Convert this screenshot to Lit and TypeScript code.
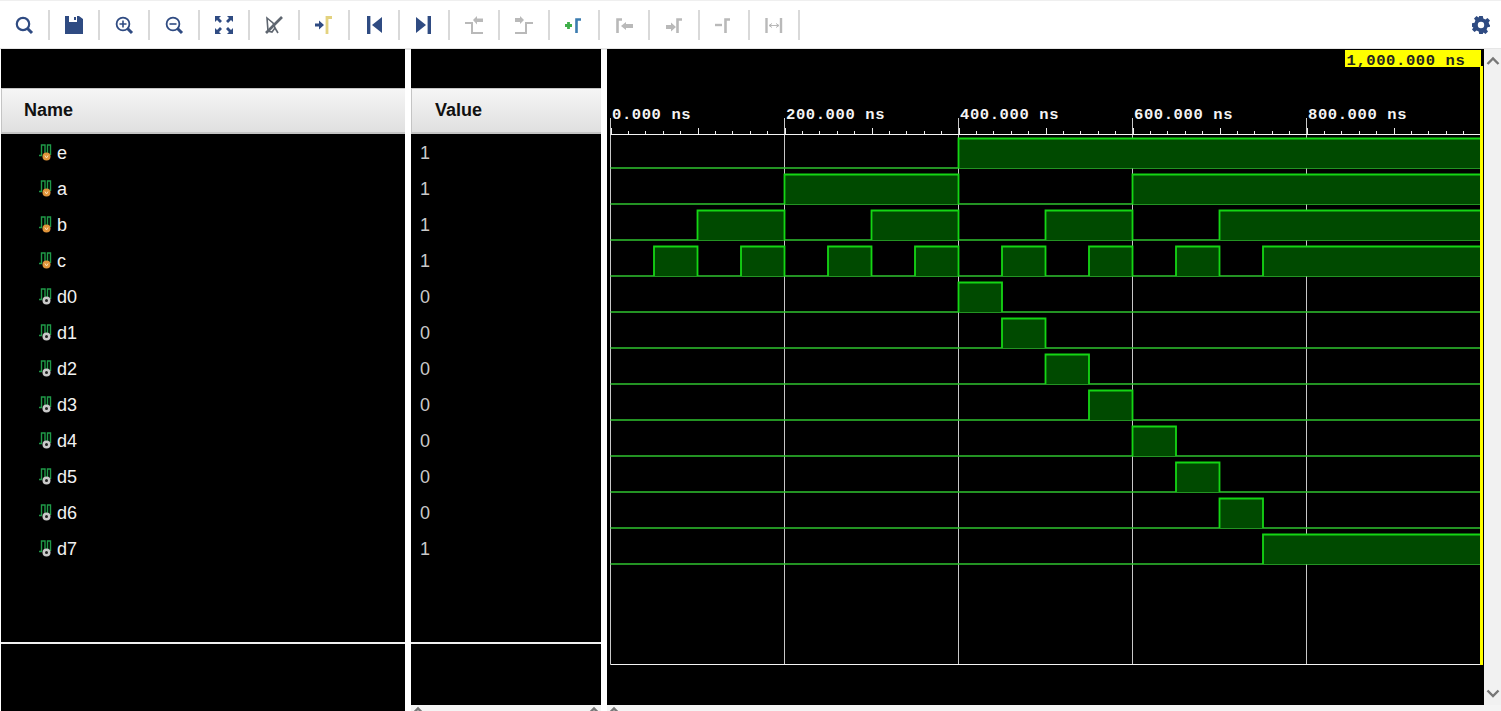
import { LitElement, html, css, svg } from "lit";
import { customElement } from "lit/decorators.js";

const NAVY = "#2f4b82";
const GREY = "#b9b9b9";
const RED_GREY = "#5f6670";

// time in ns -> screen x, the svg below uses page coordinates
const tx = (t: number) => 610.5 + t * 0.87;
const ROW_TOP = 138.5;
const ROW_H = 36;
const HIGH_H = 30;

type Signal = { name: string; value: string; input: boolean; high: [number, number][] };

const periodic = (start: number, period: number, width: number, lastOpen: number): [number, number][] => {
  const out: [number, number][] = [];
  for (let t = start; t < 1000; t += period) {
    out.push(t >= lastOpen ? [t, 1000] : [t, t + width]);
    if (t >= lastOpen) break;
  }
  return out;
};

const signals: Signal[] = [
  { name: "e", value: "1", input: true, high: [[400, 1000]] },
  { name: "a", value: "1", input: true, high: [[200, 400], [600, 1000]] },
  { name: "b", value: "1", input: true, high: periodic(100, 200, 100, 700) },
  { name: "c", value: "1", input: true, high: periodic(50, 100, 50, 750) },
  { name: "d0", value: "0", input: false, high: [[400, 450]] },
  { name: "d1", value: "0", input: false, high: [[450, 500]] },
  { name: "d2", value: "0", input: false, high: [[500, 550]] },
  { name: "d3", value: "0", input: false, high: [[550, 600]] },
  { name: "d4", value: "0", input: false, high: [[600, 650]] },
  { name: "d5", value: "0", input: false, high: [[650, 700]] },
  { name: "d6", value: "0", input: false, high: [[700, 750]] },
  { name: "d7", value: "1", input: false, high: [[750, 1000]] },
];

const bracket = (x: number, color: string) =>
  svg`<path d="M${x + 6} 4.5H${x + 1.5}V18" fill="none" stroke=${color} stroke-width="2.6"/>`;

const icons = [
  svg`<circle cx="9" cy="9" r="6.2" fill="none" stroke=${NAVY} stroke-width="2.2"/><path d="M13.5 13.5L18 18" stroke=${NAVY} stroke-width="3"/>`,
  svg`<path fill=${NAVY} d="M1 1H5V7H13V1H15L19 4V19H1Z"/><rect x="10" y="2" width="2" height="3" fill=${NAVY}/>`,
  svg`<circle cx="9" cy="9" r="6.4" fill="none" stroke=${NAVY} stroke-width="1.8"/><path d="M5.5 9H12.5M9 5.5V12.5" stroke=${NAVY} stroke-width="1.6"/><path d="M13.5 13.5L18 18" stroke=${NAVY} stroke-width="3"/>`,
  svg`<circle cx="9" cy="9" r="6.4" fill="none" stroke=${NAVY} stroke-width="1.8"/><path d="M5.5 9H12.5" stroke=${NAVY} stroke-width="1.6"/><path d="M13.5 13.5L18 18" stroke=${NAVY} stroke-width="3"/>`,
  svg`<g fill=${NAVY}><path d="M1 1H7L5 3L8 6L6 8L3 5L1 7Z"/><path d="M19 1H13L15 3L12 6L14 8L17 5L19 7Z"/><path d="M1 19H7L5 17L8 14L6 12L3 15L1 13Z"/><path d="M19 19H13L15 17L12 14L14 12L17 15L19 13Z"/></g>`,
  svg`<path d="M3 3L9 8L11 13L8 17L4 16Z" fill="none" stroke=${RED_GREY} stroke-width="1.6"/><path d="M2 18L18 2" stroke=${RED_GREY} stroke-width="2.6"/><path d="M11 13L14 18" stroke=${RED_GREY} stroke-width="1.6"/>`,
  svg`<path fill=${NAVY} d="M1 8.5H5V5.5L10 10L5 14.5V11.5H1Z"/><path d="M18 2.5H13V19" fill="none" stroke="#e3d27f" stroke-width="2.8"/>`,
  svg`<rect x="3" y="1" width="3.4" height="18" fill=${NAVY}/><path fill=${NAVY} d="M18 2V18L8 10Z"/>`,
  svg`<rect x="13.6" y="1" width="3.4" height="18" fill=${NAVY}/><path fill=${NAVY} d="M2 2V18L12 10Z"/>`,
  svg`<path d="M1 8H8V18H19" fill="none" stroke=${GREY} stroke-width="2"/><path fill=${GREY} d="M9 5L13 1V3.500H19V7H13V9.500Z"/>`,
  svg`<path d="M19 8H12V18H1" fill="none" stroke=${GREY} stroke-width="2"/><path fill=${GREY} d="M10 5L6 1V3H1V7H6V9Z"/>`,
  svg`<path d="M1 10.500H8M4.500 7V14" stroke="#3fae49" stroke-width="2.800"/>${bracket(11, "#3b7cb0")}`,
  svg`${bracket(2, GREY)}<path fill=${GREY} d="M7 11L12 7V9H19V13H12V15Z"/>`,
  svg`<path fill=${GREY} d="M2 10H7V7.500L12 12L7 16.500V14H2Z"/>${bracket(12, GREY)}`,
  svg`<path d="M1 10H8" stroke=${GREY} stroke-width="2.400"/>${bracket(10, GREY)}`,
  svg`<path d="M2.500 3V18M17 3V18" stroke=${GREY} stroke-width="2.400"/><path d="M5 10.500H15M5 10.500L8 8.500M5 10.500L8 12.500M15 10.500L12 8.500M15 10.500L12 12.500" stroke=${GREY} stroke-width="1" fill="none"/>`,
];

@customElement("wave-view")
export class WaveView extends LitElement {
  static styles = css`
    :host {
      display: block;
      background: #000;
      overflow: hidden;
    }
    svg {
      display: block;
    }
    .axis {
      font: bold 15.500px "Liberation Mono", monospace;
      letter-spacing: 0.600px;
      fill: #f4f4f4;
    }
    .cursor-label {
      font: bold 15.500px "Liberation Mono", monospace;
      letter-spacing: 0.600px;
      fill: #222;
    }
    .low {
      stroke: #2fc42f;
      stroke-width: 1.500;
      fill: none;
    }
    .fill {
      fill: #004a00;
    }
    .edge {
      stroke: #14d614;
      stroke-width: 1.800;
      fill: none;
    }
    .grid {
      stroke: #c8c8c8;
      stroke-width: 1;
    }
  `;

  private ticks() {
    const out = [];
    for (let i = 0; i <= 50; i++) {
      const t = i * 20;
      const x = Math.round(tx(t)) + 0.5;
      const h = t % 100 === 0 ? 6 : 3;
      out.push(svg`<path d="M${x} 134V${134 - h}" stroke="#eee" stroke-width="1"/>`);
    }
    return out;
  }

  private wave(s: Signal, row: number) {
    const base = ROW_TOP + row * ROW_H + HIGH_H - 0.5;
    const top = ROW_TOP + row * ROW_H;
    const parts = [svg`<path class="low" d="M${tx(0)} ${base}H${tx(1000)}"/>`];
    for (const [a, b] of s.high) {
      const x1 = tx(a);
      const x2 = tx(b);
      const open = b === 1000;
      parts.push(svg`<rect class="fill" x=${x1} y=${top} width=${x2 - x1} height=${base - top}/>`);
      parts.push(svg`<path class="edge" d="M${x1} ${base}V${top}H${x2}${open ? "" : `V${base}`}"/>`);
    }
    return parts;
  }

  render() {
    const marks = [0, 200, 400, 600, 800];
    return html`<svg width="877" height="656" viewBox="607 49 877 656">
      ${marks.map((t) => svg`<path class="grid" d="M${tx(t)} 118V664.500"/>`)}
      <path d="M610.500 134.500H1481" stroke="#f4f4f4" stroke-width="1"/>
      <path d="M610.500 664.500H1481" stroke="#f4f4f4" stroke-width="1"/>
      ${this.ticks()}
      ${marks.map(
        (t) => svg`<text class="axis" x=${tx(t) + 1.500} y="119">${t}.000 ns</text>`,
      )}
      ${signals.map((s, i) => this.wave(s, i))}
      <rect x="1345" y="50" width="136" height="17" fill="#ffff00"/>
      <text class="cursor-label" x="1346.500" y="64.500">1,000.000 ns</text>
      <rect x="1481" y="49" width="2" height="18" fill="#000"/>
      <rect x="1480" y="66" width="3" height="599" fill="#ffff00"/>
    </svg>`;
  }
}

@customElement("app-root")
export class AppRoot extends LitElement {
  static styles = css`
    :host {
      display: block;
      width: 1501px;
      height: 711px;
      overflow: hidden;
      background: #fff;
      font-family: "Liberation Sans", Arial, sans-serif;
    }
    .toolbar {
      height: 47px;
      display: flex;
      align-items: center;
      background: #fff;
      border-top: 1px solid #efefef;
      border-bottom: 2px solid #e6e6e6;
      box-sizing: content-box;
    }
    .tool {
      width: 48px;
      height: 30px;
      margin-right: 0;
      border-right: 2px solid #d9d9d9;
      display: flex;
      align-items: center;
      justify-content: center;
    }
    .spacer {
      flex: 1;
    }
    .gear {
      margin-right: 10px;
      display: block;
    }
    .main {
      display: grid;
      grid-template-columns: 404px 190px 877px 17px;
      column-gap: 6px;
      height: 662px;
      margin-top: -1px;
      padding-left: 1px;
      column-gap: 0;
    }
    .panel {
      display: flex;
      flex-direction: column;
      background: #000;
      min-height: 0;
    }
    .names {
      margin-right: 0;
    }
    .values {
      margin-left: 6px;
      width: 190px;
    }
    .main {
      grid-template-columns: 404px 196px 6px 877px 17px;
    }
    .head-gap {
      height: 39px;
      flex: none;
    }
    .head {
      height: 46px;
      flex: none;
      box-sizing: border-box;
      display: flex;
      align-items: center;
      font-size: 18px;
      font-weight: bold;
      color: #111;
      background: linear-gradient(#f5f5f5, #e0e0e0);
      border: 1px solid #c4c4c4;
      border-width: 1px 0 2px 1px;
    }
    .names .head {
      padding-left: 22px;
    }
    .values .head {
      padding-left: 23px;
    }
    .rows {
      height: 510px;
      flex: none;
      border-bottom: 2px solid #f0f0f0;
      padding-top: 1px;
      box-sizing: border-box;
    }
    .row {
      height: 36px;
      display: flex;
      align-items: center;
      font-size: 18px;
      color: #f2f2f2;
    }
    .names .row {
      padding-left: 37px;
      gap: 4px;
    }
    .values .row {
      padding-left: 9px;
      color: #c9c9c9;
    }
    .row svg {
      display: block;
      margin-top: -2px;
    }
    .filler {
      flex: 1;
    }
    .names {
      height: 662px;
    }
    .values,
    .wave {
      height: 656px;
    }
    .hbar {
      display: flex;
      justify-content: space-between;
      height: 6px;
      overflow: hidden;
      background: #f4f4f4;
    }
    .values-col .hbar {
      margin-left: 6px;
    }
    .hbar svg {
      display: block;
      margin-top: 0;
    }
    .vbar {
      height: 656px;
      background: #f1f1f1;
      display: flex;
      flex-direction: column;
      justify-content: space-between;
      align-items: center;
      padding: 6px 0 5px;
      box-sizing: border-box;
    }
    .vbar svg {
      display: block;
    }
  `;

  private chevron(up: boolean, w = 14) {
    const d = up ? "M1.500 9L7 3.500L12.500 9" : "M1.500 1.500L7 7L12.500 1.500";
    return html`<svg width=${w} height="11" viewBox="0 0 14 11"><path d=${d} fill="none" stroke="#777" stroke-width="2.400"/></svg>`;
  }

  private signalIcon(input: boolean) {
    const fill = input ? "#e0943a" : "#c9c9c9";
    return html`<svg width="15" height="18" viewBox="0 0 15 18">
      <path d="M1 12.500H3.500V2H7V12M9.500 12V2H12.500V12" fill="none" stroke="#1f9a48" stroke-width="1.400"/>
      <circle cx="8.500" cy="13.500" r="4" fill=${fill}/>
      ${input
        ? svg`<path d="M7 12.500L8.500 15L10 12.500" fill="none" stroke="#fbe2b8" stroke-width="1"/>`
        : svg`<circle cx="8.500" cy="13.500" r="1.500" fill="#222"/>`}
    </svg>`;
  }

  render() {
    return html`
      <div class="toolbar">
        ${icons.map(
          (ic) => html`<div class="tool"><svg width="20" height="20" viewBox="0 0 20 20">${ic}</svg></div>`,
        )}
        <div class="spacer"></div>
        <svg class="gear" width="20" height="20" viewBox="0 0 20 20">
          <path fill=${NAVY} fill-rule="evenodd" d="M8.200 1H11.800L12.300 3.500L14.400 4.400L16.500 3L19 5.500L17.600 7.600L18.500 9.700L19 10.300V11.800L16.500 12.300L15.600 14.400L17 16.500L14.500 19L12.400 17.600L11.800 19H8.200L7.700 16.500L5.600 15.600L3.500 17L1 14.500L2.400 12.400L1 11.800V8.200L3.500 7.700L4.400 5.600L3 3.500L5.500 1L7.600 2.400ZM10 6.800A3.200 3.200 0 1 0 10 13.200A3.200 3.200 0 1 0 10 6.800Z"/>
        </svg>
      </div>
      <div class="main">
        <div class="panel names">
          <div class="head-gap"></div>
          <div class="head">Name</div>
          <div class="rows">
            ${signals.map(
              (s) => html`<div class="row">${this.signalIcon(s.input)}<span>${s.name}</span></div>`,
            )}
          </div>
          <div class="filler"></div>
        </div>
        <div class="values-col">
          <div class="panel values">
            <div class="head-gap"></div>
            <div class="head">Value</div>
            <div class="rows">
              ${signals.map((s) => html`<div class="row"><span>${s.value}</span></div>`)}
            </div>
            <div class="filler"></div>
          </div>
          <div class="hbar">${this.chevron(true)}${this.chevron(true)}</div>
        </div>
        <div></div>
        <div>
          <wave-view class="wave"></wave-view>
          <div class="hbar">${this.chevron(true)}</div>
        </div>
        <div>
          <div class="vbar">${this.chevron(true, 14)}${this.chevron(false, 14)}</div>
          <div class="hbar"></div>
        </div>
      </div>
    `;
  }
}
